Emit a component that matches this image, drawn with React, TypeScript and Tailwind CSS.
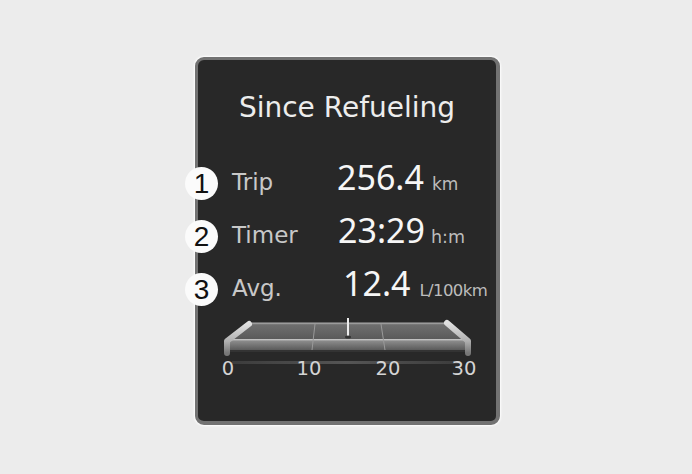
import React from 'react';

const rows = [
  { n: '1', label: 'Trip', value: '256.4', unit: 'km', valueMl: 'ml-0', unitMl: 'ml-[8px]', unitSize: 'text-[17px]' },
  { n: '2', label: 'Timer', value: '23:29', unit: 'h:m', valueMl: 'ml-[1px]', unitMl: 'ml-[6px]', unitSize: 'text-[17.5px]' },
  { n: '3', label: 'Avg.', value: '12.4', unit: 'L/100km', valueMl: 'ml-[6px]', unitMl: 'ml-[9px]', unitSize: 'text-[16.5px] tracking-[-0.6px]' },
];

const Gauge: React.FC = () => (
  <svg width="262" height="66" viewBox="0 0 262 66" className="ml-[20px] -mt-[3px] block">
    <defs>
      <linearGradient id="top" x1="0" y1="0" x2="0" y2="1">
        <stop offset="0" stopColor="#9a9a9a" />
        <stop offset="0.12" stopColor="#6e6e6e" />
        <stop offset="1" stopColor="#5a5a5a" />
      </linearGradient>
      <linearGradient id="front" x1="0" y1="0" x2="0" y2="1">
        <stop offset="0" stopColor="#d0d0d0" />
        <stop offset="0.2" stopColor="#8a8a8a" />
        <stop offset="1" stopColor="#5a5a5a" />
      </linearGradient>
      <linearGradient id="cap" x1="0" y1="0" x2="0" y2="1">
        <stop offset="0" stopColor="#e0e0e0" />
        <stop offset="0.6" stopColor="#b0b0b0" />
        <stop offset="1" stopColor="#777" />
      </linearGradient>
      <linearGradient id="scale" x1="0" y1="0" x2="1" y2="0">
        <stop offset="0" stopColor="#3c3c3c" />
        <stop offset="0.5" stopColor="#555" />
        <stop offset="1" stopColor="#3c3c3c" />
      </linearGradient>
    </defs>
    {/* top face */}
    <path d="M30 7 L230 7 L247 23 L8 23 Z" fill="url(#top)" />
    <path d="M30 7 L230 7" stroke="#a8a8a8" strokeWidth="1.2" />
    {/* front face */}
    <rect x="8" y="23" width="240" height="11" fill="url(#front)" />
    <rect x="8" y="34" width="240" height="2" fill="#333" />
    {/* dividers */}
    <path d="M97 8 L94 34" stroke="#9a9a9a" strokeWidth="1" />
    <path d="M163 8 L167 34" stroke="#9a9a9a" strokeWidth="1" />
    {/* end caps */}
    <path d="M31 8 L9 25 L9 37" fill="none" stroke="url(#cap)" strokeWidth="6" strokeLinejoin="round" strokeLinecap="round" />
    <path d="M229 7 L250 25 L250 37" fill="none" stroke="url(#cap)" strokeWidth="6" strokeLinejoin="round" strokeLinecap="round" />
    {/* needle */}
    <rect x="129" y="2" width="2" height="18" fill="#ececec" />
    <ellipse cx="130" cy="21" rx="3" ry="1.5" fill="#333" />
    {/* scale line */}
    <rect x="14" y="45" width="228" height="3" fill="url(#scale)" />
    <g fontFamily="'DejaVu Sans', sans-serif" fontSize="19.5" fill="#d4d4d4" textAnchor="middle">
      <text x="10" y="59">0</text>
      <text x="91" y="59">10</text>
      <text x="170" y="59">20</text>
      <text x="246" y="59">30</text>
    </g>
  </svg>
);

const App: React.FC = () => {
  return (
    <div className="w-[692px] h-[474px] bg-[#ececec] pl-[195px] pt-[57px]">
      <div className="relative w-[305px] h-[368px] bg-[#282828] rounded-[9px] border-[3px] border-r-4 border-b-4 border-[#727272] shadow-[0_0_2px_1px_rgba(255,255,255,0.95)]">
        <div className="pt-[34px] text-center text-[28px] leading-none text-[#ededed] font-['DejaVu_Sans',sans-serif]">
          Since Refueling
        </div>
        <div className="mt-[38px]">
          {rows.map((r) => (
            <div key={r.n} className="relative flex items-baseline h-[53px] pl-[34px]">
              <div className="absolute left-[-13px] top-[7px] w-[33px] h-[33px] rounded-full bg-[#fbfbfb] flex items-center justify-center text-[28px] leading-none text-[#111] font-['Liberation_Sans',sans-serif]">
                {r.n}
              </div>
              <span className="w-[105px] text-[23px] leading-none text-[#c8c8c8] font-['DejaVu_Sans',sans-serif]">
                {r.label}
              </span>
              <span className={`${r.valueMl} text-[34px] leading-none text-[#f6f6f6] font-['Noto_Sans',sans-serif]`}>
                {r.value}
              </span>
              <span className={`${r.unitMl} ${r.unitSize} leading-none text-[#bcbcbc] font-['DejaVu_Sans',sans-serif]`}>
                {r.unit}
              </span>
            </div>
          ))}
        </div>
        <Gauge />
      </div>
    </div>
  );
};

export default App;
